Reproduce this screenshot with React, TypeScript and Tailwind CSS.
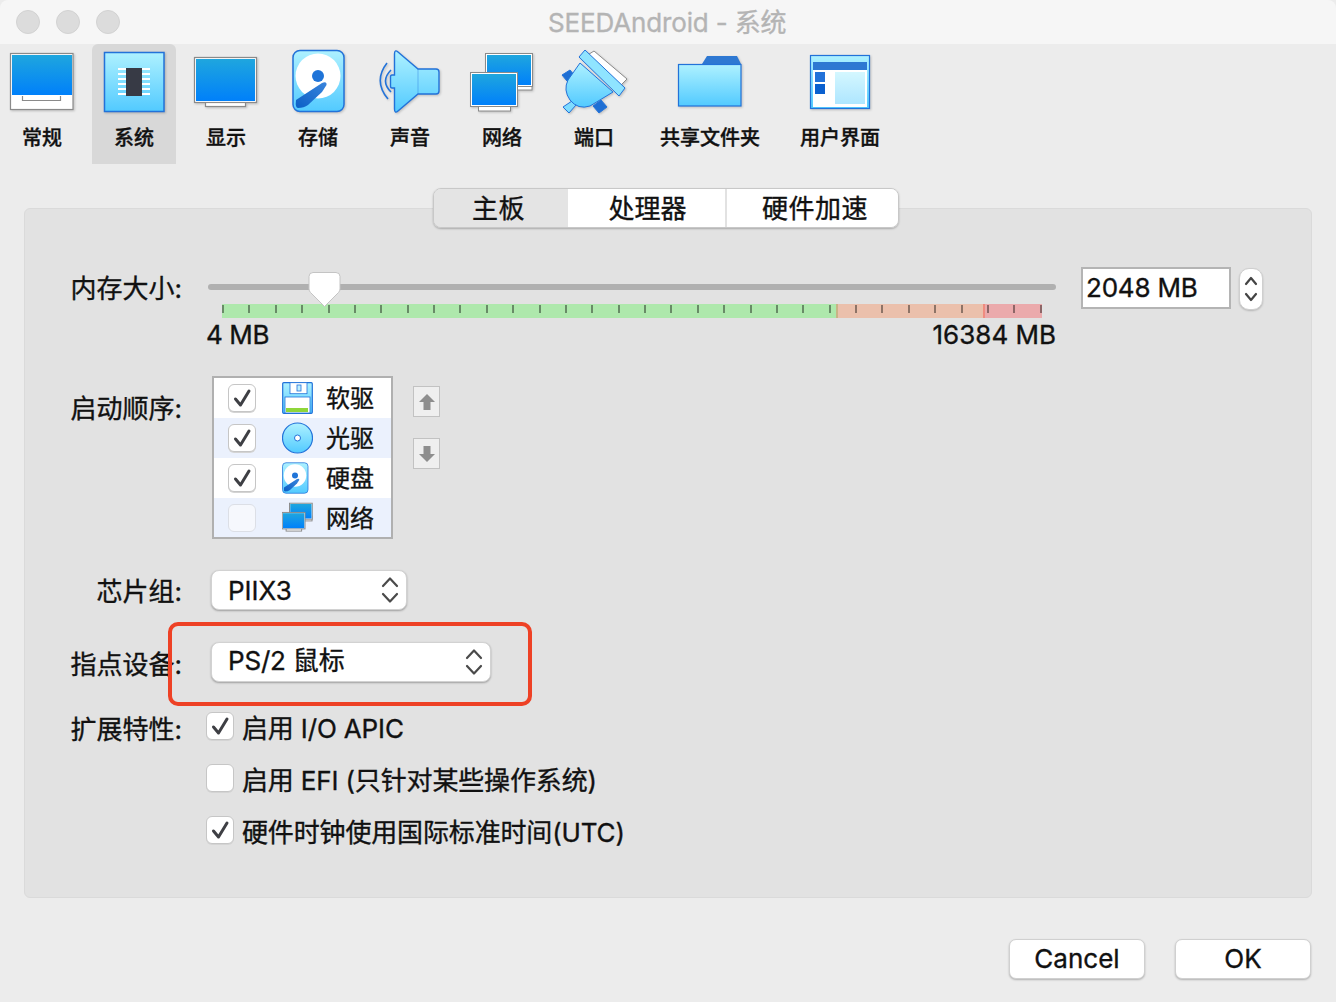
import React from "react";

const fontStack = { fontFamily: '"Inter", "Noto Sans CJK SC", sans-serif' };

/* Shared gradients for the settings icons */
function IconDefs() {
  return (
    <svg width="0" height="0" className="absolute">
      <defs>
        <linearGradient id="screenFill" x1="0" y1="0" x2="0" y2="1">
          <stop offset="0" stopColor="#1fa6de" />
          <stop offset="1" stopColor="#0080fa" />
        </linearGradient>
        <linearGradient id="lightFill" x1="0" y1="0" x2="0" y2="1">
          <stop offset="0" stopColor="#aef1ff" />
          <stop offset="1" stopColor="#52caff" />
        </linearGradient>
        <linearGradient id="paneFill" x1="0" y1="0" x2="0" y2="1">
          <stop offset="0" stopColor="#d4f7ff" />
          <stop offset="1" stopColor="#aee6ff" />
        </linearGradient>
        <linearGradient id="armFill" x1="1" y1="0" x2="0" y2="1">
          <stop offset="0" stopColor="#3a85dc" />
          <stop offset="1" stopColor="#0a5fc6" />
        </linearGradient>
      </defs>
    </svg>
  );
}

const BLUE = "#2272d9";
const GREY = "#8a8a8a";

function HddShape() {
  return (
    <g>
      <rect x="293" y="50.5" width="51" height="61" rx="7" fill="url(#lightFill)" stroke={BLUE} strokeWidth="1.5" />
      <circle cx="318" cy="76" r="22.5" fill="#fff" />
      <circle cx="318" cy="76" r="6" fill="#1f74d8" />
      <path d="M296 100 L322 83 Q327 81 326.5 85 L322 92 L308 105 Q304 108 298 108 Q295 108 296 100Z" fill="url(#armFill)" />
    </g>
  );
}

function NetShape({ sw = 1 }: { sw?: number }) {
  return (
    <g>
      <rect x="511" y="80" width="21" height="10" fill="#fff" stroke={GREY} strokeWidth={sw} />
      <rect x="485.5" y="53.5" width="47" height="33" fill="#fff" stroke={GREY} strokeWidth={sw} />
      <rect x="487" y="55" width="44" height="30" fill="url(#screenFill)" />
      <rect x="478.5" y="104" width="32" height="7" fill="#fff" stroke={GREY} strokeWidth={sw} />
      <rect x="470.5" y="72.5" width="47" height="34" fill="#fff" stroke={GREY} strokeWidth={sw} />
      <rect x="472" y="74" width="44" height="31" fill="url(#screenFill)" />
    </g>
  );
}

const toolbarIcons: Record<string, React.ReactNode> = {
  general: (
    <g>
      <rect x="10.5" y="53.5" width="62.5" height="56" fill="#fff" stroke={GREY} strokeWidth="1.2" />
      <rect x="12" y="55" width="60" height="40" fill="url(#screenFill)" />
      <path d="M22.5 96 V100.5 H60.5 V96" fill="none" stroke={GREY} strokeWidth="1.2" />
    </g>
  ),
  system: (
    <g>
      <rect x="104.5" y="52.5" width="59.5" height="59" fill="url(#lightFill)" stroke={BLUE} strokeWidth="1.5" />
      {[68, 73, 78, 83, 88, 93].map((y) => (
        <rect key={y} x="118" y={y} width="32" height="2" fill="#fff" />
      ))}
      <rect x="126" y="68" width="16" height="28" fill="#373a45" />
    </g>
  ),
  display: (
    <g>
      <rect x="205.5" y="100" width="40" height="6.5" fill="#fff" stroke={GREY} strokeWidth="1.2" />
      <rect x="194.5" y="57.5" width="62" height="45" fill="#fff" stroke={GREY} strokeWidth="1.2" />
      <rect x="196" y="59" width="59" height="42" fill="url(#screenFill)" />
    </g>
  ),
  storage: <HddShape />,
  sound: (
    <g>
      <path d="M387 63 Q373 81 388 99 M391 70 Q380 81 391 92" fill="none" stroke={BLUE} strokeWidth="1.6" />
      <path d="M394.5 54 Q394.5 49 398 52 L418 69 H436 Q439 69 439 72 V91 Q439 94 436 94 H418 L398 111 Q394.5 114 394.5 109 V88 H392 Q390.5 88 390.5 86 V77 Q390.5 75 392 75 H394.5Z" fill="url(#lightFill)" stroke={BLUE} strokeWidth="1.4" />
      <path d="M418 69 V94" stroke={BLUE} strokeWidth="0.8" opacity="0.5" />
    </g>
  ),
  network: <NetShape />,
  port: (
    <g stroke={BLUE} strokeWidth="1">
      <polygon points="594,51 627,79 618,88 586,56" fill="#fff" stroke={GREY} />
      <polygon points="562,75 570,70 575,76 567,81" fill="#1f6fd4" />
      <polygon points="593,106 601,100 607,107 599,113" fill="#1f6fd4" />
      <polygon points="563,107 572,101 576,105 569,113" fill="#7fdcff" />
      <path d="M580 63 L613 92 L590 106 Q578 110 570 100 Q563 90 568 80Z" fill="url(#lightFill)" />
      <polygon points="585,50 625,88 619,96 579,57" fill="#8fe4ff" />
    </g>
  ),
  folder: (
    <g>
      <polygon points="702,64 707,56 737,56 741,64" fill="#2e78d2" />
      <rect x="678.5" y="64.5" width="62.5" height="41.5" fill="url(#lightFill)" stroke={BLUE} strokeWidth="1.2" />
    </g>
  ),
  ui: (
    <g>
      <rect x="810.5" y="55.5" width="59" height="53" fill="url(#lightFill)" stroke={BLUE} strokeWidth="1.2" />
      <rect x="813" y="62" width="54" height="45" fill="#fff" />
      <rect x="813" y="62" width="54" height="8" fill="#2e78d2" />
      <rect x="815" y="72" width="10" height="10" fill="#2272d9" />
      <rect x="815" y="84" width="10" height="10" fill="#0a60cf" />
      <rect x="835" y="72" width="30" height="32" fill="url(#paneFill)" />
    </g>
  ),
};

const toolbarItems = [
  { key: "general", label: "常规", x: 0, w: 84 },
  { key: "system", label: "系统", x: 92, w: 84, active: true },
  { key: "display", label: "显示", x: 184, w: 84 },
  { key: "storage", label: "存储", x: 276, w: 84 },
  { key: "sound", label: "声音", x: 368, w: 84 },
  { key: "network", label: "网络", x: 460, w: 84 },
  { key: "port", label: "端口", x: 552, w: 84 },
  { key: "folder", label: "共享文件夹", x: 644, w: 132 },
  { key: "ui", label: "用户界面", x: 784, w: 112 },
];

function Chevrons() {
  return (
    <svg width="18" height="30" viewBox="0 0 18 30" fill="none" stroke="#4a4a4a" strokeWidth="2.2" strokeLinecap="round" strokeLinejoin="round">
      <path d="M2 11 L9 3.5 L16 11" />
      <path d="M2 19 L9 26.5 L16 19" />
    </svg>
  );
}

function CheckMark() {
  return (
    <svg width="26" height="26" viewBox="0 0 26 26" fill="none" stroke="#3e3f44" strokeWidth="3" strokeLinecap="round" strokeLinejoin="round">
      <path d="M6.5 14 L11.5 20 L20 6" />
    </svg>
  );
}

function Check({ checked, faded }: { checked: boolean; faded?: boolean }) {
  return (
    <div
      className={
        faded
          ? "w-[28px] h-[28px] shrink-0 rounded-[6px] border border-[#dcdfe6] bg-[#f6f8fd]"
          : "w-[28px] h-[28px] shrink-0 rounded-[6px] border border-[#c6c6c6] bg-white shadow-[0_1px_0_#d4d4d4]"
      }
    >
      {checked && <CheckMark />}
    </div>
  );
}

function FieldLabel({ children, h }: { children: React.ReactNode; h: number }) {
  return (
    <div className="w-[157px] shrink-0 text-right text-[26px] text-[#111] whitespace-nowrap" style={{ lineHeight: `${h}px` }}>
      {children}
    </div>
  );
}

function Select({ text, className, textClass = "" }: { text: string; className: string; textClass?: string }) {
  return (
    <div className={`h-[40px] rounded-[8px] bg-white border border-[#d2d2d2] shadow-[0_1px_2px_rgba(0,0,0,0.3)] flex items-center justify-between pl-[16px] pr-[7px] text-[26px] text-[#111] ${className}`}>
      <span className={`whitespace-nowrap ${textClass}`}>{text}</span>
      <Chevrons />
    </div>
  );
}

function ArrowButton({ d }: { d: string }) {
  return (
    <div className="w-[27px] h-[31px] bg-[#efefef] border border-[#c2c2c2] flex items-center justify-center">
      <svg width="18" height="18" viewBox="0 0 18 18">
        <path d={d} fill="#8e8e8e" />
      </svg>
    </div>
  );
}

const bootRows = [
  {
    label: "软驱",
    checked: true,
    icon: (
      <svg width="31" height="32" viewBox="0 0 31 32">
        <rect x="0.7" y="0.7" width="29.6" height="30.6" rx="1" fill="url(#lightFill)" stroke={BLUE} strokeWidth="1.2" />
        <rect x="8" y="0.7" width="17" height="11" fill="#fff" stroke={BLUE} strokeWidth="0.8" />
        <rect x="15" y="3" width="4" height="6" fill="#bfefff" stroke={BLUE} strokeWidth="0.8" />
        <rect x="3" y="15" width="25" height="16" fill="#fff" stroke={BLUE} strokeWidth="0.8" />
        <rect x="4" y="26" width="22" height="4" fill="#8fd63a" />
      </svg>
    ),
  },
  {
    label: "光驱",
    checked: true,
    icon: (
      <svg width="31" height="32" viewBox="0 0 31 32">
        <circle cx="15.5" cy="16" r="15" fill="url(#lightFill)" stroke={BLUE} strokeWidth="1.2" />
        <circle cx="15.5" cy="16" r="3" fill="#fff" stroke={BLUE} strokeWidth="1" />
      </svg>
    ),
  },
  {
    label: "硬盘",
    checked: true,
    icon: (
      <svg width="31" height="32" viewBox="292 49 62 64">
        <HddShape />
      </svg>
    ),
  },
  {
    label: "网络",
    checked: false,
    icon: (
      <svg width="31" height="32" viewBox="470 52 64 64">
        <NetShape sw={2} />
      </svg>
    ),
  },
];

const tickIndexes = Array.from({ length: 32 }, (_, i) => i);

export default function App() {
  return (
    <div className="relative w-[1336px] h-[1002px] overflow-hidden bg-[#ececec] text-[#111] [-webkit-text-stroke-width:0.35px]" style={fontStack}>
      <IconDefs />

      {/* Title bar */}
      <div className="relative h-[44px] rounded-t-[8px] bg-[#f6f6f6] flex items-center pl-[16px] gap-[16px]">
        {[0, 1, 2].map((i) => (
          <div key={i} className="w-[24px] h-[24px] rounded-full bg-[#dcdcdc] border border-[#d2d2d2]" />
        ))}
        <div className="absolute left-[548px] top-0 leading-[46px] text-[26px] tracking-[-0.15px] text-[#b4b4b4] whitespace-nowrap">SEEDAndroid - 系统</div>
      </div>

      {/* Settings category toolbar */}
      <div className="flex h-[120px] gap-[8px]">
        {toolbarItems.map((item) => (
          <div key={item.key} className={`h-[120px] shrink-0 flex flex-col ${item.active ? "bg-[#d8d8d8] rounded-t-[6px]" : ""}`} style={{ width: item.w }}>
            <svg width={item.w} height="76" viewBox={`${item.x} 44 ${item.w} 76`} className="shrink-0 drop-shadow-[1px_1px_1px_rgba(0,0,0,0.2)]">
              {toolbarIcons[item.key]}
            </svg>
            <div className="h-[36px] leading-[36px] text-center text-[20px] font-medium text-[#111] whitespace-nowrap">{item.label}</div>
          </div>
        ))}
      </div>

      {/* Settings panel */}
      <div className="mt-[44px] mx-[24px] h-[690px] rounded-[6px] bg-[#e2e2e2] border border-[#dadada]">
        {/* Tabs */}
        <div className="-mt-[21px] ml-[408px] w-[466px] h-[40px] flex rounded-[8px] overflow-hidden border border-[#c8c8c8] shadow-[0_1px_2px_rgba(0,0,0,0.25)] text-[26px] text-[#111]">
          <div className="w-[134px] bg-[#e4e4e4] flex items-center justify-center pr-[5px] pt-[1px] tracking-[0.5px]">主板</div>
          <div className="w-[159px] bg-white border-r-2 border-[#e2e2e2] flex items-center justify-center pl-[2px] pt-[1px]">处理器</div>
          <div className="flex-1 bg-white flex items-center justify-center pl-[5px] pt-[1px] tracking-[0.5px]">硬件加速</div>
        </div>

        {/* Memory size */}
        <div className="mt-[39px] flex">
          <FieldLabel h={44}>内存大小:</FieldLabel>
          <div className="relative ml-[26px] w-[848px] pt-[17px]">
            <div className="h-[6px] rounded-full bg-[#b0b0b0]" />
            <div className="mt-[14px] mx-[14px] h-[14px] relative flex">
              <div className="w-[614px] bg-[#aee8ac]" />
              <div className="w-[147px] bg-[#ebc0ac] border-l-2 border-[#c8b486]" />
              <div className="flex-1 bg-[#ebaaac] border-l-2 border-[#f08c80]" />
              <div className="absolute inset-x-0 top-[1px] flex justify-between">
                {tickIndexes.map((i) => (
                  <div key={i} className="w-[2px] h-[8px] bg-black/40" />
                ))}
              </div>
            </div>
            <div className="flex justify-between h-[32px] leading-[32px] text-[26px] mt-[1px]">
              <span className="-ml-[2px] tracking-[-0.4px]">4 MB</span>
              <span>16384 MB</span>
            </div>
            {/* Slider thumb */}
            <svg width="35" height="38" viewBox="0 0 35 38" className="absolute left-[99px] top-[4px]">
              <path d="M6 1.5 H29 Q33 1.5 33 5.5 V18 Q33 20 31.5 21.5 L17.5 35.5 L3.5 21.5 Q2 20 2 18 V5.5 Q2 1.5 6 1.5Z" fill="#fff" stroke="#c4c4c4" strokeWidth="1" />
            </svg>
          </div>
          <div className="ml-[25px] w-[150px] h-[42px] bg-white border-2 border-[#b4b4b4] text-[26px] leading-[38px] pl-[3px] tracking-[-0.2px]">2048 MB</div>
          <div className="ml-[8px] mt-[1px] w-[24px] h-[42px] rounded-[10px] bg-white border border-[#cfcfcf] shadow-[0_1px_2px_rgba(0,0,0,0.2)] flex items-center justify-center">
            <svg width="14" height="30" viewBox="0 0 14 30" fill="none" stroke="#444" strokeWidth="2.2" strokeLinecap="round" strokeLinejoin="round">
              <path d="M2 10 L7 4 L12 10" />
              <path d="M2 20 L7 26 L12 20" />
            </svg>
          </div>
        </div>

        {/* Boot order */}
        <div className="mt-[25px] flex">
          <FieldLabel h={66}>启动顺序:</FieldLabel>
          <div className="ml-[30px] w-[181px] border-2 border-[#b0b0b0] bg-white">
            {bootRows.map((row, i) => (
              <div key={row.label} className={`flex items-center pl-[14px] ${i === 3 ? "h-[39px]" : "h-[40px]"} ${i % 2 === 1 ? "bg-[#ebf1fd]" : "bg-white"}`}>
                <Check checked={row.checked} faded={!row.checked} />
                <div className="ml-[26px] shrink-0 flex">{row.icon}</div>
                <span className="ml-[13px] pt-[2px] text-[24px] text-[#111] whitespace-nowrap">{row.label}</span>
              </div>
            ))}
          </div>
          <div className="ml-[20px] mt-[10px] flex flex-col gap-[21px]">
            <ArrowButton d="M9 1 L17 9 H12.5 V17 H5.5 V9 H1Z" />
            <ArrowButton d="M9 17 L17 9 H12.5 V1 H5.5 V9 H1Z" />
          </div>
        </div>

        {/* Chipset */}
        <div className="mt-[31px] flex">
          <FieldLabel h={44}>芯片组:</FieldLabel>
          <Select text="PIIX3" className="ml-[29px] w-[196px]" />
        </div>

        {/* Pointing device */}
        <div className="mt-[28px] flex">
          <FieldLabel h={46}>指点设备:</FieldLabel>
          <Select text="PS/2 鼠标" textClass="-mt-[3px] tracking-[-0.2px]" className="ml-[29px] w-[280px]" />
        </div>

        {/* Extended features */}
        <div className="mt-[23px] flex">
          <FieldLabel h={38}>扩展特性:</FieldLabel>
          <div className="ml-[24px] flex flex-col gap-[16px]">
            {[
              { text: "启用 I/O APIC", checked: true },
              { text: "启用 EFI (只针对某些操作系统)", checked: false },
              { text: "硬件时钟使用国际标准时间(UTC)", checked: true },
            ].map((row) => (
              <div key={row.text} className="h-[36px] flex">
                <div className="mt-[1px]">
                  <Check checked={row.checked} />
                </div>
                <span className="ml-[8px] text-[26px] leading-[36px] tracking-[-0.15px] text-[#111] whitespace-nowrap">{row.text}</span>
              </div>
            ))}
          </div>
        </div>
      </div>

      {/* Dialog buttons */}
      <div className="mt-[41px] flex justify-end gap-[30px] pr-[25px]">
        {["Cancel", "OK"].map((t) => (
          <div key={t} className="w-[136px] h-[40px] rounded-[7px] bg-white border border-[#d0d0d0] shadow-[0_1px_2px_rgba(0,0,0,0.25)] flex items-center justify-center pb-[1px] text-[26px] text-[#111]">
            {t}
          </div>
        ))}
      </div>

      {/* Red highlight drawn over the pointing device row */}
      <div className="absolute left-[168px] top-[622px] w-[364px] h-[84px] rounded-[10px] border-[4px] border-[#ee4125]" />
    </div>
  );
}
